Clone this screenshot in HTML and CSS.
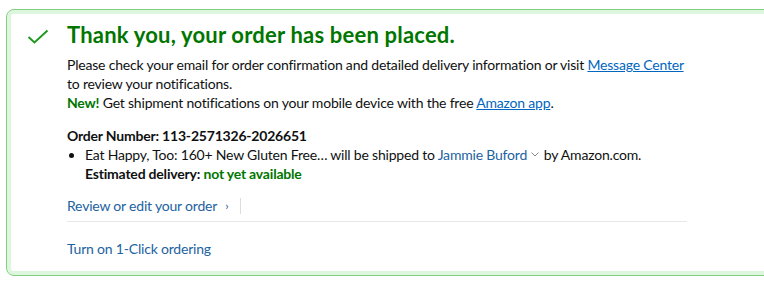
FILE: index.html
```html
<!DOCTYPE html>
<html lang="en">
<head>
  <meta charset="UTF-8" />
  <title>Order placed</title>
  <link rel="stylesheet" href="styles.css">
</head>
<body>
  <div class="alert-box">
    <div class="alert-icon">
      <svg viewBox="0 0 22 16" width="22" height="16">
        <path d="M1.5 8 L7.5 13.5 L20.5 1.5" fill="none" stroke="#1e9a1e" stroke-width="2"></path>
      </svg>
    </div>
    <div class="alert-content">
      <h4 class="alert-heading">Thank you, your order has been placed.</h4>
      <p class="alert-text">
        Please check your email for order confirmation and detailed delivery information or visit <a href="#" class="link-underline">Message Center</a> to review your notifications.
        <br>
        <span class="new-label">New!</span> Get shipment notifications on your mobile device with the free <a href="#" class="link-underline">Amazon app</a>.
      </p>

      <div class="order-info">
        <div class="order-number">Order Number: 113-2571326-2026651</div>
        <ul class="shipment-list">
          <li>
            Eat Happy, Too: 160+ New Gluten Free… will be shipped to <a href="#" class="link">Jammie Buford</a>
            <svg class="caret" viewBox="0 0 8 5" width="8" height="5"><path d="M0.5 0.5 L4 4 L7.5 0.5" fill="none" stroke="#888" stroke-width="1"></path></svg>
            by Amazon.com.
            <div><b>Estimated delivery:</b> <span class="delivery-status">not yet available</span></div>
          </li>
        </ul>
      </div>

      <div class="order-actions">
        <a href="#" class="link">Review or edit your order</a>
        <span class="chevron">›</span>
        <span class="divider"></span>
      </div>

      <div class="one-click">
        <a href="#" class="link">Turn on 1-Click ordering</a>
      </div>
    </div>
  </div>
</body>
</html>
```

FILE: styles.css
```css
html,
body {
  overflow: hidden;
}

body {
  margin: 0;
  padding: 9px 0 0 6px;
  background: #fff;
  font-family: Lato, "Liberation Sans", Arial, sans-serif;
  font-size: 14px;
  line-height: 19px;
  letter-spacing: -0.2px;
  color: #0f1111;
}

.alert-box {
  display: flex;
  width: 820px;
  box-sizing: border-box;
  border: 1px solid #80cf80;
  border-radius: 8px;
  box-shadow: inset 0 0 0 4px #ddf6dd;
  padding: 11px 18px 17px 20px;
}

.alert-icon {
  width: 40px;
  padding-top: 8px;
  flex-shrink: 0;
}

.alert-content {
  width: 620px;
}

.alert-heading {
  margin: 0 0 6px;
  font-size: 22px;
  line-height: 28px;
  font-weight: 700;
  letter-spacing: 0.2px;
  color: #007600;
}

.alert-text {
  margin: 0;
}

.new-label {
  color: #007600;
  font-weight: 700;
}

a {
  text-decoration: none;
}

.link-underline {
  color: #0066c0;
  text-decoration: underline;
}

.link {
  color: #2162a1;
}

.order-info {
  margin-top: 14px;
}

.order-number {
  font-weight: 700;
}

.shipment-list {
  margin: 0;
  padding-left: 18px;
}

.caret {
  vertical-align: 3px;
  margin: 0 1px;
}

.delivery-status {
  color: #007600;
  font-weight: 700;
}

.order-actions {
  display: flex;
  align-items: center;
  gap: 8px;
  margin-top: 13px;
  padding-bottom: 6px;
  border-bottom: 1px solid #e7e7e7;
}

.chevron {
  color: #2162a1;
  font-size: 12px;
}

.divider {
  width: 1px;
  height: 16px;
  background: #ddd;
  margin-left: 4px;
}

.one-click {
  padding-top: 17px;
}
```
